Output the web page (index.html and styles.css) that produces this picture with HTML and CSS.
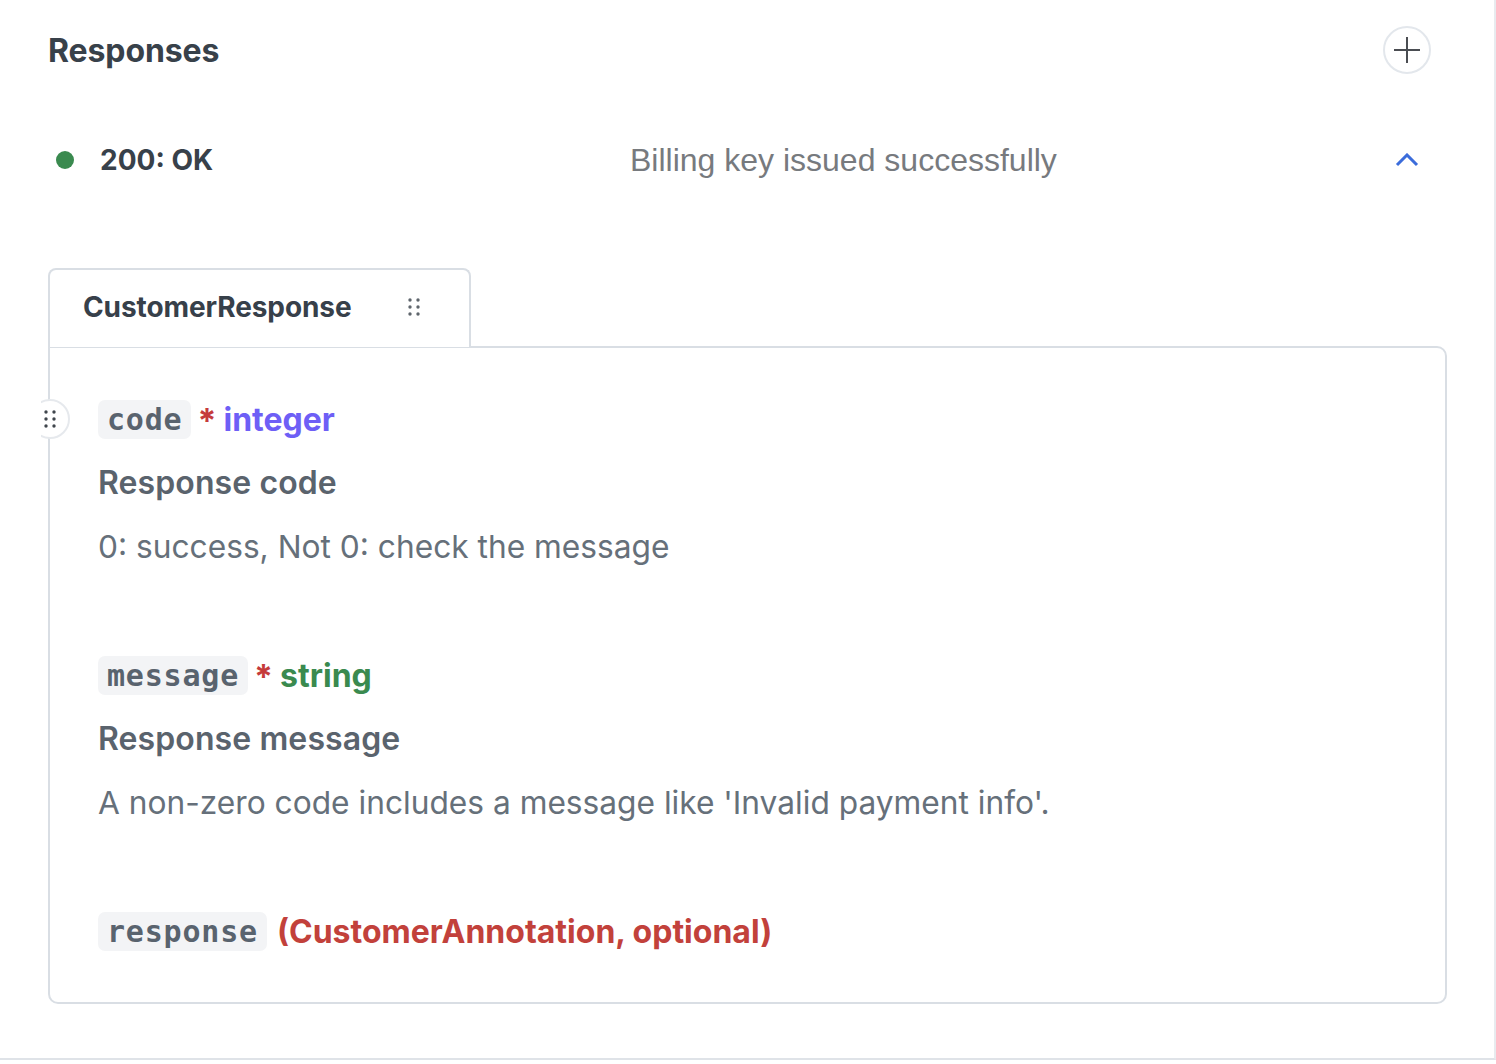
FILE: index.html
```html
<!DOCTYPE html>
<html lang="en">
<head>
<meta charset="utf-8">
<title>Responses</title>
<link rel="stylesheet" href="styles.css">
</head>
<body>
<div class="frame">
  <div class="page">
    <header class="header">
      <h2 class="title">Responses</h2>
      <button class="add-btn" aria-label="Add response">
        <svg width="28" height="28" viewBox="0 0 28 28"><path d="M14 1v26M1 14h26" stroke="#4a4d52" stroke-width="2" fill="none"/></svg>
      </button>
    </header>

    <div class="status-row">
      <div class="status">
        <span class="dot"></span>
        <span class="status-label">200: OK</span>
      </div>
      <div class="status-desc">Billing key issued successfully</div>
      <div class="chevron">
        <svg width="24" height="14" viewBox="0 0 24 14"><path d="M2 12L12 2l10 10" stroke="#3b6cdb" stroke-width="3" fill="none"/></svg>
      </div>
    </div>

    <div class="schema">
      <div class="tab">
        <span class="tab-title">CustomerResponse</span>
        <svg class="grip" width="12" height="20" viewBox="0 0 12 20"><g fill="#5f656c"><circle cx="2" cy="3" r="1.7"/><circle cx="10" cy="3" r="1.7"/><circle cx="2" cy="10" r="1.7"/><circle cx="10" cy="10" r="1.7"/><circle cx="2" cy="17" r="1.7"/><circle cx="10" cy="17" r="1.7"/></g></svg>
      </div>
      <div class="panel">
        <div class="field">
          <div class="field-head">
            <span class="handle">
              <svg width="12" height="20" viewBox="0 0 12 20"><g fill="#3f454c"><circle cx="2" cy="3" r="1.7"/><circle cx="10" cy="3" r="1.7"/><circle cx="2" cy="10" r="1.7"/><circle cx="10" cy="10" r="1.7"/><circle cx="2" cy="17" r="1.7"/><circle cx="10" cy="17" r="1.7"/></g></svg>
            </span>
            <code class="name">code</code>
            <span class="req">*</span>
            <span class="type type-int">integer</span>
          </div>
          <div class="field-title">Response code</div>
          <div class="field-desc">0: success, Not 0: check the message</div>
        </div>

        <div class="field">
          <div class="field-head">
            <code class="name">message</code>
            <span class="req">*</span>
            <span class="type type-str">string</span>
          </div>
          <div class="field-title">Response message</div>
          <div class="field-desc">A non-zero code includes a message like 'Invalid payment info'.</div>
        </div>

        <div class="field">
          <div class="field-head">
            <code class="name">response</code>
            <span class="type type-ref">(CustomerAnnotation, optional)</span>
          </div>
        </div>
      </div>
    </div>
  </div>
</div>
</body>
</html>
```

FILE: styles.css
```css
* { box-sizing: border-box; }

html, body {
  margin: 0;
  padding: 0;
  background: #ffffff;
}

body {
  font-family: "Inter", "Noto Sans", sans-serif;
  color: #3a424b;
}

.frame {
  width: 1496px;
  height: 1060px;
  border-right: 2px solid #e8ebef;
  border-bottom: 2px solid #dfe3e8;
  overflow: hidden;
}

.page {
  padding: 0 47px 0 48px;
  width: 1494px;
}

.header {
  height: 100px;
  display: flex;
  align-items: center;
  justify-content: space-between;
  padding-right: 16px;
}

.title {
  margin: 0;
  font-size: 32px;
  font-weight: 700;
  color: #38414a;
  letter-spacing: -0.1px;
}

.add-btn {
  width: 48px;
  height: 48px;
  border-radius: 50%;
  border: 2px solid #e3e7ec;
  background: #fff;
  display: flex;
  align-items: center;
  justify-content: center;
  padding: 0;
}

.status-row {
  height: 120px;
  display: grid;
  grid-template-columns: 582px 1fr 48px;
  align-items: center;
  padding-right: 16px;
}

.status {
  display: flex;
  align-items: center;
  gap: 26px;
  padding-left: 8px;
}

.dot {
  width: 18px;
  height: 18px;
  border-radius: 50%;
  background: #3a8a4f;
}

.status-label {
  font-size: 28px;
  font-weight: 700;
  color: #38414a;
}

.status-desc {
  font-family: "Liberation Sans", Arial, sans-serif;
  font-size: 32px;
  color: #777a7e;
}

.chevron {
  display: flex;
  justify-content: center;
  align-items: center;
}

.schema {
  margin-top: 48px;
}

.tab {
  position: relative;
  z-index: 1;
  width: 423px;
  height: 79px;
  margin-bottom: -1px;
  border: 2px solid #d9dee4;
  border-bottom: none;
  border-radius: 8px 8px 0 0;
  background: #fff;
  display: flex;
  align-items: center;
  justify-content: space-between;
  padding: 0 49px 4px 33px;
}

.tab-title {
  font-size: 28px;
  font-weight: 700;
  color: #37404a;
  letter-spacing: -0.1px;
}

.panel {
  border: 2px solid #d9dee4;
  border-radius: 0 10px 10px 10px;
  padding: 47px 48px 47px 48px;
  display: flex;
  flex-direction: column;
  gap: 80px;
}

.field {
  display: flex;
  flex-direction: column;
  gap: 16px;
}

.field-head {
  position: relative;
  height: 48px;
  display: flex;
  align-items: center;
}

.handle {
  position: absolute;
  left: -68px;
  top: 4px;
  width: 40px;
  height: 40px;
  border-radius: 50%;
  border: 2px solid #e6e9ed;
  background: #fff;
  display: flex;
  align-items: center;
  justify-content: center;
  clip-path: inset(0 0 0 11px);
}

.name {
  font-family: "DejaVu Sans Mono", "Liberation Mono", monospace;
  font-weight: 700;
  font-size: 30px;
  color: #59636e;
  background: #f3f4f6;
  border-radius: 7px;
  padding: 0 9px;
  height: 39px;
  line-height: 39px;
  letter-spacing: 0.8px;
}

.req {
  color: #c53b3b;
  font-size: 34px;
  font-weight: 700;
  margin-left: 6px;
  line-height: 1;
  position: relative;
  top: 2px;
}

.type {
  font-size: 32px;
  font-weight: 700;
  margin-left: 7px;
}

.type-int { color: #6e5ff6; }
.type-str { color: #3a8a4f; }
.type-ref { color: #c2413b; margin-left: 10px; }

.field-title {
  height: 48px;
  line-height: 48px;
  font-size: 32px;
  font-weight: 600;
  color: #5a636d;
  letter-spacing: 0.1px;
}

.field-desc {
  height: 48px;
  line-height: 48px;
  font-size: 31.7px;
  font-weight: 400;
  color: #66707a;
}
```
